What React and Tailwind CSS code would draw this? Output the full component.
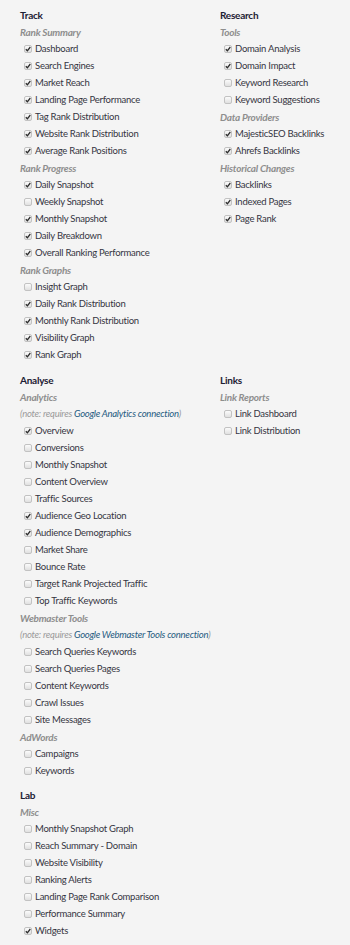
import React from 'react';

const track = [
    {
        title: 'Rank Summary',
        items: [
            ['Dashboard', true],
            ['Search Engines', true],
            ['Market Reach', true],
            ['Landing Page Performance', true],
            ['Tag Rank Distribution', true],
            ['Website Rank Distribution', true],
            ['Average Rank Positions', true],
        ],
    },
    {
        title: 'Rank Progress',
        items: [
            ['Daily Snapshot', true],
            ['Weekly Snapshot', false],
            ['Monthly Snapshot', true],
            ['Daily Breakdown', true],
            ['Overall Ranking Performance', true],
        ],
    },
    {
        title: 'Rank Graphs',
        items: [
            ['Insight Graph', false],
            ['Daily Rank Distribution', true],
            ['Monthly Rank Distribution', true],
            ['Visibility Graph', true],
            ['Rank Graph', true],
        ],
    },
];

const research = [
    {
        title: 'Tools',
        items: [
            ['Domain Analysis', true],
            ['Domain Impact', true],
            ['Keyword Research', false],
            ['Keyword Suggestions', false],
        ],
    },
    {
        title: 'Data Providers',
        items: [
            ['MajesticSEO Backlinks', true],
            ['Ahrefs Backlinks', true],
        ],
    },
    {
        title: 'Historical Changes',
        items: [
            ['Backlinks', true],
            ['Indexed Pages', true],
            ['Page Rank', true],
        ],
    },
];

const analyse = [
    {
        title: 'Analytics',
        note: 'Google Analytics connection',
        items: [
            ['Overview', true],
            ['Conversions', false],
            ['Monthly Snapshot', false],
            ['Content Overview', false],
            ['Traffic Sources', false],
            ['Audience Geo Location', true],
            ['Audience Demographics', true],
            ['Market Share', false],
            ['Bounce Rate', false],
            ['Target Rank Projected Traffic', false],
            ['Top Traffic Keywords', false],
        ],
    },
    {
        title: 'Webmaster Tools',
        note: 'Google Webmaster Tools connection',
        items: [
            ['Search Queries Keywords', false],
            ['Search Queries Pages', false],
            ['Content Keywords', false],
            ['Crawl Issues', false],
            ['Site Messages', false],
        ],
    },
    {
        title: 'AdWords',
        items: [
            ['Campaigns', false],
            ['Keywords', false],
        ],
    },
];

const links = [
    {
        title: 'Link Reports',
        items: [
            ['Link Dashboard', false],
            ['Link Distribution', false],
        ],
    },
];

const lab = [
    {
        title: 'Misc',
        items: [
            ['Monthly Snapshot Graph', false],
            ['Reach Summary - Domain', false],
            ['Website Visibility', false],
            ['Ranking Alerts', false],
            ['Landing Page Rank Comparison', false],
            ['Performance Summary', false],
            ['Widgets', true],
        ],
    },
];

// petite case à cocher grise
const Box = ({ checked }) => (
    <span className="w-[8px] h-[8px] mr-[3px] shrink-0 rounded-[2px] border border-[#c2c2c2] bg-gradient-to-b from-[#fbfbfb] to-[#e0e0e0] flex items-center justify-center">
        {checked && (
            <svg width="6" height="6" viewBox="0 0 6 6">
                <path d="M0.8 3.2 L2.4 4.8 L5.3 1" fill="none" stroke="#2e2e2e" strokeWidth="1.3" />
            </svg>
        )}
    </span>
);

const Column = ({ heading, groups }) => (
    <div className="flex flex-col">
        <div className="h-[17px] flex items-center font-bold text-[#1c2033] text-[10px]">{heading}</div>
        {groups.map((group) => (
            <div key={group.title} className="flex flex-col">
                <div className="h-[17px] flex items-center font-bold italic text-[#8e8e8e] text-[10px]">{group.title}</div>
                {group.note && (
                    <div className="h-[17px] flex items-center italic text-[#9a9a9a]">
                        (note: requires&nbsp;<span className="text-[#245a80]">{group.note}</span>)
                    </div>
                )}
                {group.items.map(([label, checked]) => (
                    <label key={label} className="h-[17px] pl-[4px] flex items-center text-[#353542]">
                        <Box checked={checked} />
                        {label}
                    </label>
                ))}
            </div>
        ))}
    </div>
);

export default function App() {
    return (
        <div className="min-h-[945px] bg-[#f4f4f4] pt-[6px] pl-[20px] text-[9.5px] tracking-[-0.25px] leading-none font-['Lato',sans-serif] whitespace-nowrap">
            <div className="grid grid-cols-[200px_1fr]">
                <Column heading="Track" groups={track} />
                <Column heading="Research" groups={research} />
            </div>
            <div className="grid grid-cols-[200px_1fr] mt-[8px]">
                <Column heading="Analyse" groups={analyse} />
                <Column heading="Links" groups={links} />
            </div>
            <div className="grid grid-cols-[200px_1fr] mt-[7px]">
                <Column heading="Lab" groups={lab} />
            </div>
        </div>
    );
}
